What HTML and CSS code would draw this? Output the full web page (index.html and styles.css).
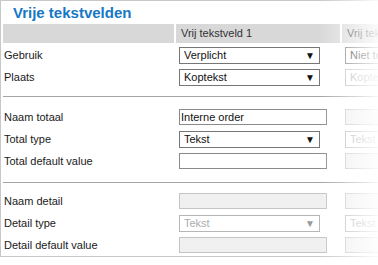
FILE: index.html
```html
<!DOCTYPE html>
<html lang="nl">
<head>
  <meta charset="UTF-8" />
  <title>Vrije tekstvelden</title>
  <link rel="stylesheet" href="styles.css">
</head>
<body>
  <div class="panel">
    <h2 class="title">Vrije tekstvelden</h2>

    <div class="row head">
      <div class="cell"></div>
      <div class="cell">Vrij tekstveld 1</div>
      <div class="cell">Vrij tekstveld 2</div>
    </div>

    <!-- gebruik / plaats -->
    <div class="section first">
      <div class="row">
        <div class="label">Gebruik</div>
        <div class="select"><select><option>Verplicht</option></select></div>
        <div class="select"><select><option>Niet toegestaan</option></select></div>
      </div>
      <div class="row">
        <div class="label">Plaats</div>
        <div class="select"><select><option>Koptekst</option></select></div>
        <div class="select disabled"><select disabled><option>Koptekst</option></select></div>
      </div>
    </div>

    <!-- totaal -->
    <div class="section second">
      <div class="row">
        <div class="label">Naam totaal</div>
        <div><input type="text" value="Interne order"></div>
        <div><input type="text" disabled></div>
      </div>
      <div class="row">
        <div class="label">Total type</div>
        <div class="select"><select><option>Tekst</option></select></div>
        <div class="select disabled"><select disabled><option>Tekst</option></select></div>
      </div>
      <div class="row">
        <div class="label">Total default value</div>
        <div><input type="text"></div>
        <div><input type="text" disabled></div>
      </div>
    </div>

    <!-- detail -->
    <div class="section third">
      <div class="row">
        <div class="label">Naam detail</div>
        <div><input type="text" disabled></div>
        <div><input type="text" disabled></div>
      </div>
      <div class="row">
        <div class="label">Detail type</div>
        <div class="select disabled"><select disabled><option>Tekst</option></select></div>
        <div class="select disabled"><select disabled><option>Tekst</option></select></div>
      </div>
      <div class="row">
        <div class="label">Detail default value</div>
        <div><input type="text" disabled></div>
        <div><input type="text" disabled></div>
      </div>
    </div>

    <div class="fade"></div>
  </div>
</body>
</html>
```

FILE: styles.css
```css
* {
  margin: 0;
  padding: 0;
  box-sizing: border-box;
}

body {
  font-family: 'Liberation Sans', Arial, sans-serif;
  font-size: 11px;
  color: #1a1a1a;
  background: #fff;
  overflow: hidden;
}

.panel {
  position: relative;
  width: 600px;
  height: 257px;
  border: 1px solid #c8c8c8;
  border-right: none;
  padding-left: 2px;
}

.title {
  height: 23px;
  padding: 3px 0 0 10px;
  font-size: 15px;
  font-weight: bold;
  color: #1677c4;
}

.row {
  display: grid;
  grid-template-columns: 171px 164px 200px;
  column-gap: 2px;
  height: 22px;
  align-items: center;
}

.row.head {
  height: 19px;
}

.head .cell {
  height: 19px;
  background: #d8d8d8;
  color: #333;
  padding: 3px 0 0 5px;
}

.label {
  padding-left: 1px;
}

.section.first {
  padding-top: 1px;
  padding-bottom: 8px;
  border-bottom: 1px solid #a4a4a4;
}

.section.second {
  padding-top: 9px;
  padding-bottom: 10px;
  border-bottom: 1px solid #a4a4a4;
}

.section.third {
  padding-top: 7px;
}

.select {
  position: relative;
  width: 144px;
  padding-left: 3px;
}

.select select {
  appearance: none;
  width: 141px;
  height: 17px;
  border: 1px solid #767676;
  border-radius: 0;
  background: #fff;
  font-family: 'Liberation Sans', Arial, sans-serif;
  font-size: 11px;
  color: #111;
  padding: 0 0 0 4px;
  outline: none;
}

.select::after {
  content: "\25BC";
  position: absolute;
  left: 129px;
  top: 2px;
  font-size: 10px;
  line-height: 13px;
  color: #111;
  pointer-events: none;
}

.select.disabled select {
  color: #8a8a8a;
  border-color: #9a9a9a;
}

.select.disabled::after {
  color: #9a9a9a;
}

input[type="text"] {
  display: block;
  margin-left: 3px;
  width: 148px;
  height: 16px;
  border: 1px solid #8a8a8a;
  border-radius: 0;
  padding: 0 1px;
  font-family: 'Liberation Sans', Arial, sans-serif;
  font-size: 11px;
  color: #111;
  outline: none;
}

input[type="text"]:disabled {
  background: #f0f0f0;
  border-color: #c4c4c4;
}

.fade {
  position: absolute;
  top: -1px;
  bottom: -1px;
  left: 318px;
  width: 66px;
  background: linear-gradient(to right, rgba(255, 255, 255, 0), #fff);
}
```
